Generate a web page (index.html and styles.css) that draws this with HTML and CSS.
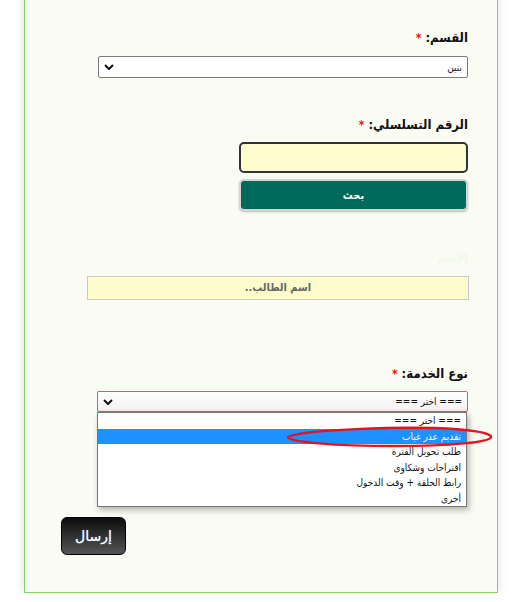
FILE: index.html
```html
<!DOCTYPE html>
<html lang="ar">
<head>
<meta charset="utf-8">
<title>نموذج</title>
<link rel="stylesheet" href="styles.css">
</head>
<body>
<form class="card" dir="rtl">
  <label class="lbl">القسم: <span class="req">*</span></label>
  <div class="select sel-dept">
    <span class="sel-text">بنين</span>
    <svg class="chev" width="10" height="6" viewBox="0 0 10 6"><path d="M1 1 L5 5 L9 1" fill="none" stroke="#111" stroke-width="2"/></svg>
  </div>

  <label class="lbl lbl-serial">الرقم التسلسلي: <span class="req">*</span></label>
  <div class="serial-input"></div>
  <button type="button" class="search-btn">بحث</button>

  <label class="lbl lbl-name">الاسم</label>
  <div class="name-input">اسم الطالب..</div>

  <label class="lbl lbl-service">نوع الخدمة: <span class="req">*</span></label>
  <div class="select-wrap">
    <div class="select sel-service">
      <span class="sel-text">=== اختر ===</span>
      <svg class="chev" width="10" height="6" viewBox="0 0 10 6"><path d="M1 1 L5 5 L9 1" fill="none" stroke="#111" stroke-width="2"/></svg>
    </div>
    <ul class="dropdown">
      <li>=== اختر ===</li>
      <li class="active">تقديم عذر غياب</li>
      <li>طلب تحويل الفترة</li>
      <li>اقتراحات وشكاوى</li>
      <li>رابط الحلقة + وقت الدخول</li>
      <li>أخرى</li>
    </ul>
    <svg class="mark" width="212" height="24" viewBox="0 0 212 24"><path d="M4 12 C 20 4, 120 2, 150 3 C 185 4, 208 8, 207 12 C 206 17, 170 21, 110 21 C 50 21, 5 17, 4 12 Z" fill="none" stroke="#e3141f" stroke-width="2.5"/></svg>
  </div>

  <button type="button" class="submit-btn">إرسال</button>
</form>
</body>
</html>
```

FILE: styles.css
```css
html, body {
  margin: 0;
  padding: 0;
  background: #ffffff;
}

body {
  font-family: "DejaVu Sans Condensed", "DejaVu Sans", sans-serif;
}

.card {
  box-sizing: border-box;
  width: 474px;
  margin: -20px 0 0 24px;
  padding: 47px 29px 37px 36px;
  background: #fafcf3;
  border: 1px solid #7ed85f;
  box-shadow: 0 0 10px rgba(0, 0, 0, 0.12);
  display: flex;
  flex-direction: column;
  align-items: flex-start;
}

.lbl {
  font-size: 13px;
  font-weight: bold;
  line-height: 20px;
  color: #111;
}

.req {
  color: #f01010;
  font-size: 12px;
}

.select {
  box-sizing: border-box;
  width: 370px;
  height: 22px;
  margin-top: 8px;
  border: 1px solid #7a7a7a;
  border-radius: 2px;
  background: #fff;
  display: flex;
  align-items: center;
  justify-content: space-between;
  padding: 0 5px 0 5px;
  font-size: 10px;
  color: #111;
}

.chev {
  display: block;
}

.lbl-serial {
  margin-top: 37px;
}

.serial-input {
  box-sizing: border-box;
  width: 229px;
  height: 31px;
  margin-top: 7px;
  background: #fffdd0;
  border: 2px solid #333;
  border-radius: 5px;
}

.search-btn {
  box-sizing: border-box;
  width: 229px;
  height: 32px;
  margin-top: 6px;
  background: #006a5a;
  color: #fff;
  font-family: inherit;
  font-size: 11px;
  font-weight: bold;
  border: 2px solid #d4d4d4;
  border-radius: 5px;
  box-shadow: 0 1px 2px rgba(0, 0, 0, 0.25);
}

.lbl-name {
  margin-top: 37px;
  color: #f1f8e8;
  font-size: 12px;
}

.name-input {
  box-sizing: border-box;
  width: 382px;
  height: 24px;
  margin-top: 8px;
  margin-right: -1px;
  background: #fffccc;
  border: 1px solid #c8c8c8;
  text-align: center;
  line-height: 22px;
  font-size: 11px;
  font-weight: bold;
  color: #666;
}

.lbl-service {
  margin-top: 64px;
}

.select-wrap {
  position: relative;
  margin-top: 7px;
}

.sel-service {
  margin-top: 0;
  width: 371px;
  height: 21px;
  border: 1px solid #e5536a;
  background: linear-gradient(#ffffff, #f1f1f1);
}

.dropdown {
  position: absolute;
  top: 21px;
  right: 1px;
  width: 370px;
  box-sizing: border-box;
  margin: 0;
  padding: 0;
  list-style: none;
  background: #fff;
  border: 1px solid #777;
  box-shadow: 2px 3px 6px rgba(0, 0, 0, 0.3);
  font-size: 10px;
  color: #111;
}

.dropdown li {
  height: 15.5px;
  line-height: 15.5px;
  padding: 0 5px;
}

.dropdown li.active {
  background: #1e90ff;
  color: #fff;
}

.mark {
  position: absolute;
  top: 34px;
  left: 187px;
  overflow: visible;
}

.submit-btn {
  align-self: flex-end;
  box-sizing: border-box;
  width: 65px;
  height: 38px;
  margin-top: 105px;
  background: linear-gradient(#0c0c0c, #555555);
  color: #fff;
  font-family: "DejaVu Sans", sans-serif;
  font-size: 14px;
  border: 1px solid #000;
  border-radius: 6px;
  text-shadow: 0 0 1px #9cf;
}
```
